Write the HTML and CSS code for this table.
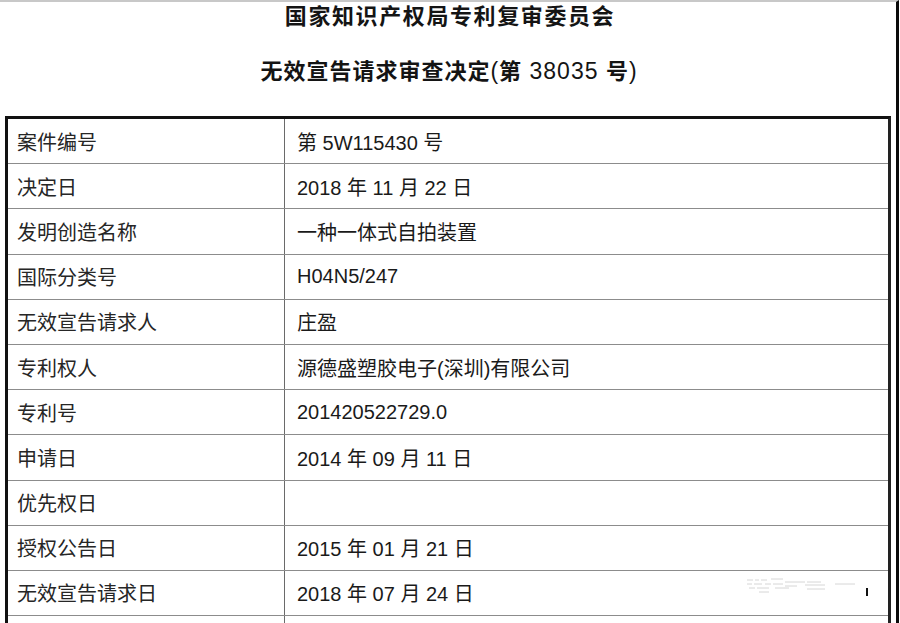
FILE: index.html
```html
<!DOCTYPE html>
<html lang="zh-CN">
<head>
<meta charset="utf-8">
<title>无效宣告请求审查决定</title>
<link rel="stylesheet" href="styles.css">
</head>
<body>
<div class="page">
  <h1 class="title">国家知识产权局专利复审委员会</h1>
  <h2 class="subtitle">无效宣告请求审查决定<span class="num">(</span>第<span class="num"> 38035 </span>号<span class="num">)</span></h2>
  <div class="sheet">
    <div class="row"><div class="label">案件编号</div><div class="value">第 5W115430 号</div></div>
    <div class="row"><div class="label">决定日</div><div class="value">2018 年 11 月 22 日</div></div>
    <div class="row"><div class="label">发明创造名称</div><div class="value">一种一体式自拍装置</div></div>
    <div class="row"><div class="label">国际分类号</div><div class="value">H04N5/247</div></div>
    <div class="row"><div class="label">无效宣告请求人</div><div class="value">庄盈</div></div>
    <div class="row"><div class="label">专利权人</div><div class="value">源德盛塑胶电子(深圳)有限公司</div></div>
    <div class="row"><div class="label">专利号</div><div class="value">201420522729.0</div></div>
    <div class="row"><div class="label">申请日</div><div class="value">2014 年 09 月 11 日</div></div>
    <div class="row"><div class="label">优先权日</div><div class="value"></div></div>
    <div class="row"><div class="label">授权公告日</div><div class="value">2015 年 01 月 21 日</div></div>
    <div class="row"><div class="label">无效宣告请求日</div><div class="value">2018 年 07 月 24 日</div></div>
    <div class="row"><div class="label"></div><div class="value"></div></div>
  </div>
  <svg class="watermark" width="130" height="24" viewBox="0 0 130 24" aria-hidden="true">
    <g stroke="#d6d6d6" stroke-width="1" fill="none">
      <path d="M2 4h6M10 4h4M16 4h6M26 3h12M40 6h20M62 6h14"/>
      <path d="M2 8h5M9 8h8M20 8h6M28 8h10M40 10h12M60 9h20M90 8h20"/>
      <path d="M4 12h6M12 12h12M30 12h14M62 13h18"/>
      <path d="M14 16h10"/>
    </g>
    <rect x="121" y="12" width="2" height="8" fill="#111"/>
  </svg>
</div>
</body>
</html>
```
FILE: styles.css
```css
html, body {
  margin: 0;
  padding: 0;
  background: #fff;
}
.page {
  position: relative;
  width: 896px;
  height: 621px;
  overflow: hidden;
  border-top: 2px solid #c8c8c8;
  border-right: 3px solid #0a0a0a;
  color: #1e1e1e;
  font-family: "Liberation Sans", "Noto Sans CJK SC", sans-serif;
}
.title {
  margin: 0;
  height: 30px;
  line-height: 30px;
  text-align: center;
  font-size: 22px;
  font-weight: 700;
  letter-spacing: 1.6px;
  padding-left: 4px;
  color: #141414;
}
.subtitle {
  margin: 24px 0 0;
  height: 30px;
  line-height: 30px;
  text-align: center;
  font-size: 22px;
  font-weight: 700;
  letter-spacing: 1px;
  padding-left: 2px;
  color: #141414;
}
.num {
  font-weight: 400;
  font-size: 23px;
}
.sheet {
  margin: 30px 0 0 5px;
  width: 886px;
  box-sizing: border-box;
  border-top: 3px solid #111;
  border-left: 3px solid #111;
  border-right: 3px solid #222;
}
.row {
  display: grid;
  grid-template-columns: 277px 1fr;
  height: 45.2px;
  box-sizing: border-box;
  border-bottom: 1px solid #8c8c8c;
}
.label, .value {
  display: flex;
  align-items: center;
  font-size: 20px;
  font-weight: 400;
}
.label {
  padding-left: 9px;
  border-right: 1px solid #6a6a6a;
  color: #262626;
}
.value {
  padding-left: 12px;
  color: #1a1a1a;
}
.watermark {
  position: absolute;
  left: 745px;
  top: 574px;
}
```
